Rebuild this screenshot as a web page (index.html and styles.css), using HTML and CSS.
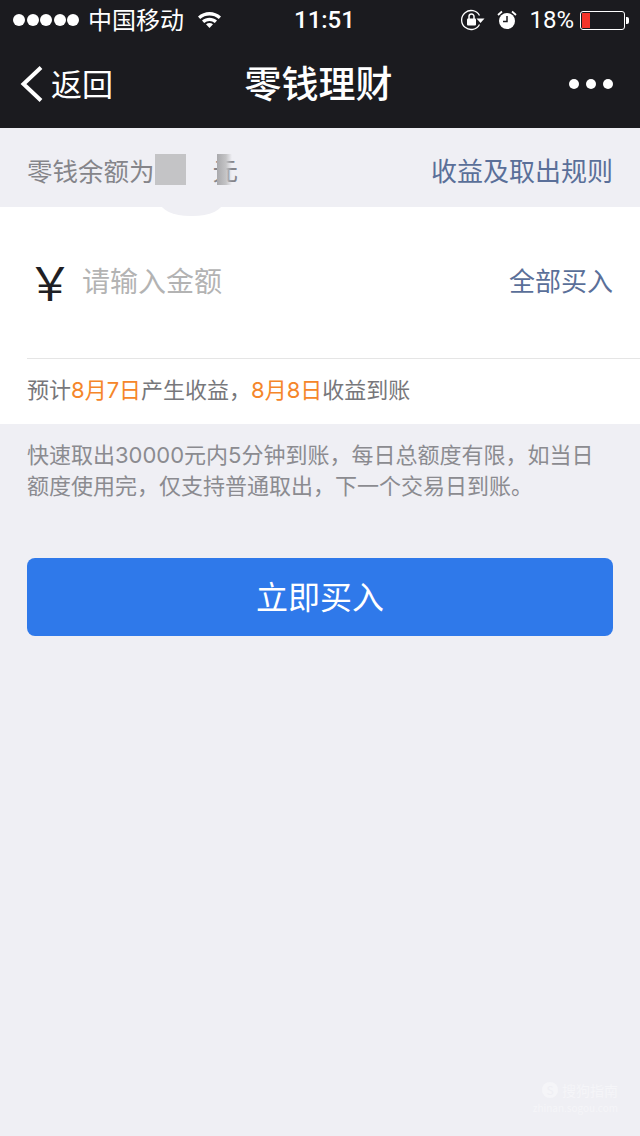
FILE: index.html
```html
<!DOCTYPE html>
<html lang="zh-CN">
<head>
  <meta charset="utf-8">
  <title>零钱理财</title>
  <link rel="stylesheet" href="styles.css">
</head>
<body>

  <div class="page">
    <div class="top">
      <div class="status">
        <div class="status-left">
          <div class="signal">
            <i></i><i></i><i></i><i></i><i></i>
          </div>
          <span class="carrier">中国移动</span>
          <svg class="wifi" width="25" height="18" viewBox="0 0 24 18">
            <path d="M0.500 6.500C7 0.500 17 0.500 23.500 6.500L21.300 9C16 4.400 8 4.400 2.700 9Z" fill="#fff"/>
            <path d="M4.500 10.500C9 6.700 15 6.700 19.500 10.500L17.300 13C14 10.300 10 10.300 6.700 13Z" fill="#fff"/>
            <path d="M8.500 14.300C10.700 12.700 13.300 12.700 15.500 14.300L12 18Z" fill="#fff"/>
          </svg>
        </div>
        <div class="time">11:51</div>
        <div class="status-right">
          <svg class="lock" width="24" height="22" viewBox="0 0 24 22">
            <path d="M18.500 15.500A9.500 9.500 0 1 1 18.500 6.500" fill="none" stroke="#fff" stroke-width="1.300"/>
            <path d="M15.500 9.500H23.500L19.500 14Z" fill="#fff"/>
            <rect x="6" y="9.500" width="9" height="7" rx="1" fill="#fff"/>
            <path d="M8 10V7.500A2.500 2.500 0 0 1 13 7.500V10" fill="none" stroke="#fff" stroke-width="1.500"/>
          </svg>
          <svg class="alarm" width="20" height="20" viewBox="0 0 20 20">
            <circle cx="10" cy="11" r="8" fill="#fff"/>
            <path d="M10 6V11.500H6" fill="none" stroke="#1b1b1f" stroke-width="1.500"/>
            <path d="M1 5L5 1.500M19 5L15 1.500" stroke="#fff" stroke-width="1.800"/>
          </svg>
          <span class="percent">18%</span>
          <div class="battery"><div class="battery-level"></div></div>
          <div class="battery-tip"></div>
        </div>
      </div>

      <div class="nav">
        <div class="back">
          <svg width="24" height="36" viewBox="0 0 24 36">
            <path d="M21 1.500L3.500 18L21 34.500" fill="none" stroke="#fff" stroke-width="4"/>
          </svg>
          <span>返回</span>
        </div>
        <div class="nav-title">零钱理财</div>
        <div class="more"><i></i><i></i><i></i></div>
      </div>
    </div>

    <div class="balance-row">
      <div class="balance">
        <span>零钱余额为</span>
        <span class="hidden-amount">
          <span class="smudge"></span>
          <span class="yuan">元</span>
          <span class="mosaic"></span>
          <span class="mosaic-fade"></span>
        </span>
      </div>
      <a class="link rules">收益及取出规则</a>
    </div>

    <div class="card">
      <div class="amount-row">
        <span class="currency">￥</span>
        <span class="placeholder">请输入金额</span>
        <a class="link buy-all">全部买入</a>
      </div>
      <div class="arrive">预计<em>8月7日</em>产生收益，<em>8月8日</em>收益到账</div>
    </div>

    <p class="note">快速取出30000元内5分钟到账，每日总额度有限，如当日额度使用完，仅支持普通取出，下一个交易日到账。</p>

    <button class="buy-btn">立即买入</button>

    <div class="watermark">
      <div class="wm-top"><span class="wm-logo">S</span>搜狗指南</div>
      <div class="wm-url">zhinan.sogou.com</div>
    </div>
  </div>

</body>
</html>
```

FILE: styles.css
```css
* {
  box-sizing: border-box;
}

body {
  margin: 0;
  background-color: #efeff4;
  font-family: "Noto Sans CJK SC", "Liberation Sans", sans-serif;
}

.page {
  position: relative;
  width: 640px;
  height: 1136px;
  overflow: hidden;
}

.top {
  height: 128px;
  background-color: #1b1b1f;
  color: #fff;
}

.status {
  display: flex;
  align-items: center;
  height: 40px;
  padding: 0 11px 0 13px;
}

.status-left {
  display: flex;
  align-items: center;
  width: 281px;
}

.status-right {
  display: flex;
  flex: 1;
  align-items: center;
  justify-content: flex-end;
}

.signal {
  display: flex;
  gap: 1.500px;
}

.signal i {
  width: 12px;
  height: 12px;
  border-radius: 50%;
  background-color: #fff;
}

.carrier {
  margin-left: 9px;
  margin-bottom: 2px;
  font-size: 24px;
  line-height: 38px;
}

.wifi {
  margin-left: 13px;
  margin-bottom: 2px;
}

.time {
  font-family: Roboto, sans-serif;
  font-size: 24px;
  font-weight: 500;
}

.lock {
  margin-right: 12px;
}

.alarm {
  margin-right: 12px;
}

.percent {
  font-family: Roboto, sans-serif;
  font-size: 24px;
  margin-right: 6px;
}

.battery {
  width: 45px;
  height: 19px;
  padding: 1px;
  border: 1px solid #fff;
  border-radius: 3px;
}

.battery-level {
  width: 8px;
  height: 100%;
  background-color: #f5352b;
}

.battery-tip {
  width: 3px;
  height: 7px;
  margin-left: 1px;
  border-radius: 0 2px 2px 0;
  background-color: #fff;
}

.nav {
  display: flex;
  align-items: center;
  justify-content: space-between;
  height: 88px;
  padding: 0 27px 0 20px;
}

.back {
  display: flex;
  align-items: center;
  width: 164px;
  font-size: 31px;
}

.back span {
  margin-left: 7px;
  margin-bottom: 3px;
}

.nav-title {
  margin-bottom: 4px;
  font-size: 37px;
  font-weight: 500;
}

.more {
  display: flex;
  justify-content: flex-end;
  gap: 7px;
  width: 160px;
}

.more i {
  width: 10px;
  height: 10px;
  border-radius: 50%;
  background-color: #fff;
}

.balance-row {
  display: flex;
  align-items: center;
  justify-content: space-between;
  height: 79px;
  padding: 4px 27px 0 27px;
}

.balance {
  display: flex;
  align-items: center;
  font-size: 25.500px;
  color: #85858a;
}

.hidden-amount {
  display: flex;
  position: relative;
  z-index: 1;
  align-items: center;
  height: 31px;
}

.smudge {
  position: absolute;
  left: 5px;
  top: 20px;
  width: 63px;
  height: 42px;
  border-radius: 0 0 30px 30px / 0 0 14px 14px;
  background-color: #efeff4;
}

.yuan {
  position: absolute;
  left: 58px;
  top: -3px;
  line-height: 36px;
}

.mosaic {
  position: relative;
  width: 31px;
  height: 31px;
  background-color: #c4c4c6;
}

.mosaic-fade {
  position: relative;
  width: 15px;
  height: 31px;
  margin-left: 31px;
  background: linear-gradient(to right, #a9a9ac, #c4c4c6 60%, rgba(239, 239, 244, 0));
}

.link {
  color: #5a6f99;
  font-size: 26px;
}

.card {
  position: relative;
  height: 217px;
  padding-left: 27px;
  background-color: #fff;
}

.amount-row {
  display: flex;
  align-items: center;
  height: 152px;
  padding: 0 27px 6px 0;
  border-bottom: 1px solid #e5e5e5;
}

.currency {
  flex-shrink: 0;
  width: 55px;
  font-size: 46px;
  font-weight: 400;
  color: #1f1f24;
}

.placeholder {
  flex: 1;
  font-size: 28px;
  color: #b3b3b3;
}

.arrive {
  height: 64px;
  font-family: Inter, "Noto Sans CJK SC", sans-serif;
  font-size: 22px;
  line-height: 62px;
  color: #77777b;
}

.arrive em {
  font-style: normal;
  color: #f5862a;
}

.note {
  margin: 0;
  padding: 16px 28px 0 27px;
  font-family: Inter, "Noto Sans CJK SC", sans-serif;
  font-size: 22px;
  line-height: 31px;
  color: #8b8b90;
}

.buy-btn {
  display: block;
  width: 586px;
  height: 78px;
  margin: 56px 0 0 27px;
  padding-bottom: 6px;
  border: 0;
  border-radius: 8px;
  background-color: #2f79ea;
  color: #fff;
  font-family: inherit;
  font-size: 32px;
}

.watermark {
  position: absolute;
  right: 22px;
  bottom: 21px;
  color: #f5f5f8;
  text-align: center;
}

.wm-top {
  display: flex;
  align-items: center;
  justify-content: flex-end;
  font-size: 14px;
}

.wm-logo {
  width: 16px;
  height: 16px;
  margin-right: 4px;
  border-radius: 50%;
  background-color: #f5f5f8;
  color: #efeff4;
  font-size: 12px;
  line-height: 16px;
}

.wm-url {
  font-size: 10px;
}
```
